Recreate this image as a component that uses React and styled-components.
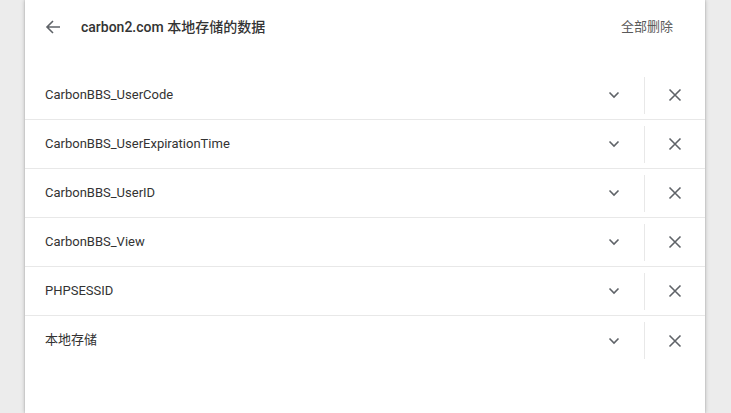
import React from "react";
import styled, { createGlobalStyle } from "styled-components";

const Global = createGlobalStyle`
  html, body { margin: 0; padding: 0; height: 100%; background: #ececec; overflow: hidden; }
  #root { height: 100%; }
  * { box-sizing: border-box; }
`;

const Page = styled.div`
  height: 413px;
  display: flex;
  justify-content: flex-start;
  padding-left: 25px;
  font-family: Roboto, "Noto Sans CJK SC", sans-serif;
`;

const Card = styled.div`
  width: 680px;
  height: 100%;
  background: #fff;
  box-shadow: 0 0 4px rgba(0, 0, 0, 0.28), 0 0 1px rgba(0, 0, 0, 0.2);
  display: flex;
  flex-direction: column;
`;

const Header = styled.div`
  height: 54px;
  display: flex;
  align-items: center;
  padding: 0 18px 0 12px;
`;

const IconButton = styled.button`
  width: ${(p) => p.$w || 32}px;
  height: 32px;
  border: none;
  background: none;
  padding: 0;
  display: flex;
  align-items: center;
  justify-content: center;
  color: #5f6368;
  cursor: pointer;
`;

const Title = styled.h1`
  margin: 0 0 0 12px;
  font-size: 14px;
  line-height: 18px;
  font-weight: 500;
  color: #333;
  flex: 1;
`;

const TextButton = styled.button`
  border: none;
  background: none;
  font-family: inherit;
  font-size: 13px;
  line-height: 16px;
  color: #5a5a5a;
  padding: 8px 14px;
`;

const List = styled.div`
  margin-top: 17px;
  display: flex;
  flex-direction: column;
`;

const Row = styled.div`
  height: 49px;
  display: flex;
  align-items: center;
  padding-left: 20px;
  border-bottom: ${(p) => (p.$last ? "none" : "1px solid #e8e8e8")};
`;

const Label = styled.span`
  flex: 1;
  font-size: 13px;
  line-height: 16px;
  color: #333;
  margin-bottom: 1px;
`;

const Divider = styled.div`
  width: 1px;
  height: 37px;
  background: #e8e8e8;
  margin-left: 10px;
`;

const Chevron = () => (
  <svg width="12" height="8" viewBox="0 0 12 8">
    <path d="M1.5 1.5 L6 6 L10.5 1.5" fill="none" stroke="#5f6368" strokeWidth="1.6" />
  </svg>
);

const Close = () => (
  <svg width="14" height="14" viewBox="0 0 14 14">
    <path d="M1.5 1.5 L12.5 12.5 M12.5 1.5 L1.5 12.5" fill="none" stroke="#5f6368" strokeWidth="1.6" />
  </svg>
);

const Back = () => (
  <svg width="16" height="16" viewBox="0 0 16 16">
    <path d="M15 8 H2 M8 2 L2 8 L8 14" fill="none" stroke="#5f6368" strokeWidth="1.6" />
  </svg>
);

const items = [
  "CarbonBBS_UserCode",
  "CarbonBBS_UserExpirationTime",
  "CarbonBBS_UserID",
  "CarbonBBS_View",
  "PHPSESSID",
  "本地存储",
];

export default function App() {
  return (
    <>
      <Global />
      <Page>
        <Card>
          <Header>
            <IconButton aria-label="back"><Back /></IconButton>
            <Title>carbon2.com 本地存储的数据</Title>
            <TextButton>全部删除</TextButton>
          </Header>
          <List>
            {items.map((it, i) => (
              <Row key={it} $last={i === items.length - 1}>
                <Label>{it}</Label>
                <IconButton $w={40}><Chevron /></IconButton>
                <Divider />
                <IconButton $w={60}><Close /></IconButton>
              </Row>
            ))}
          </List>
        </Card>
      </Page>
    </>
  );
}
